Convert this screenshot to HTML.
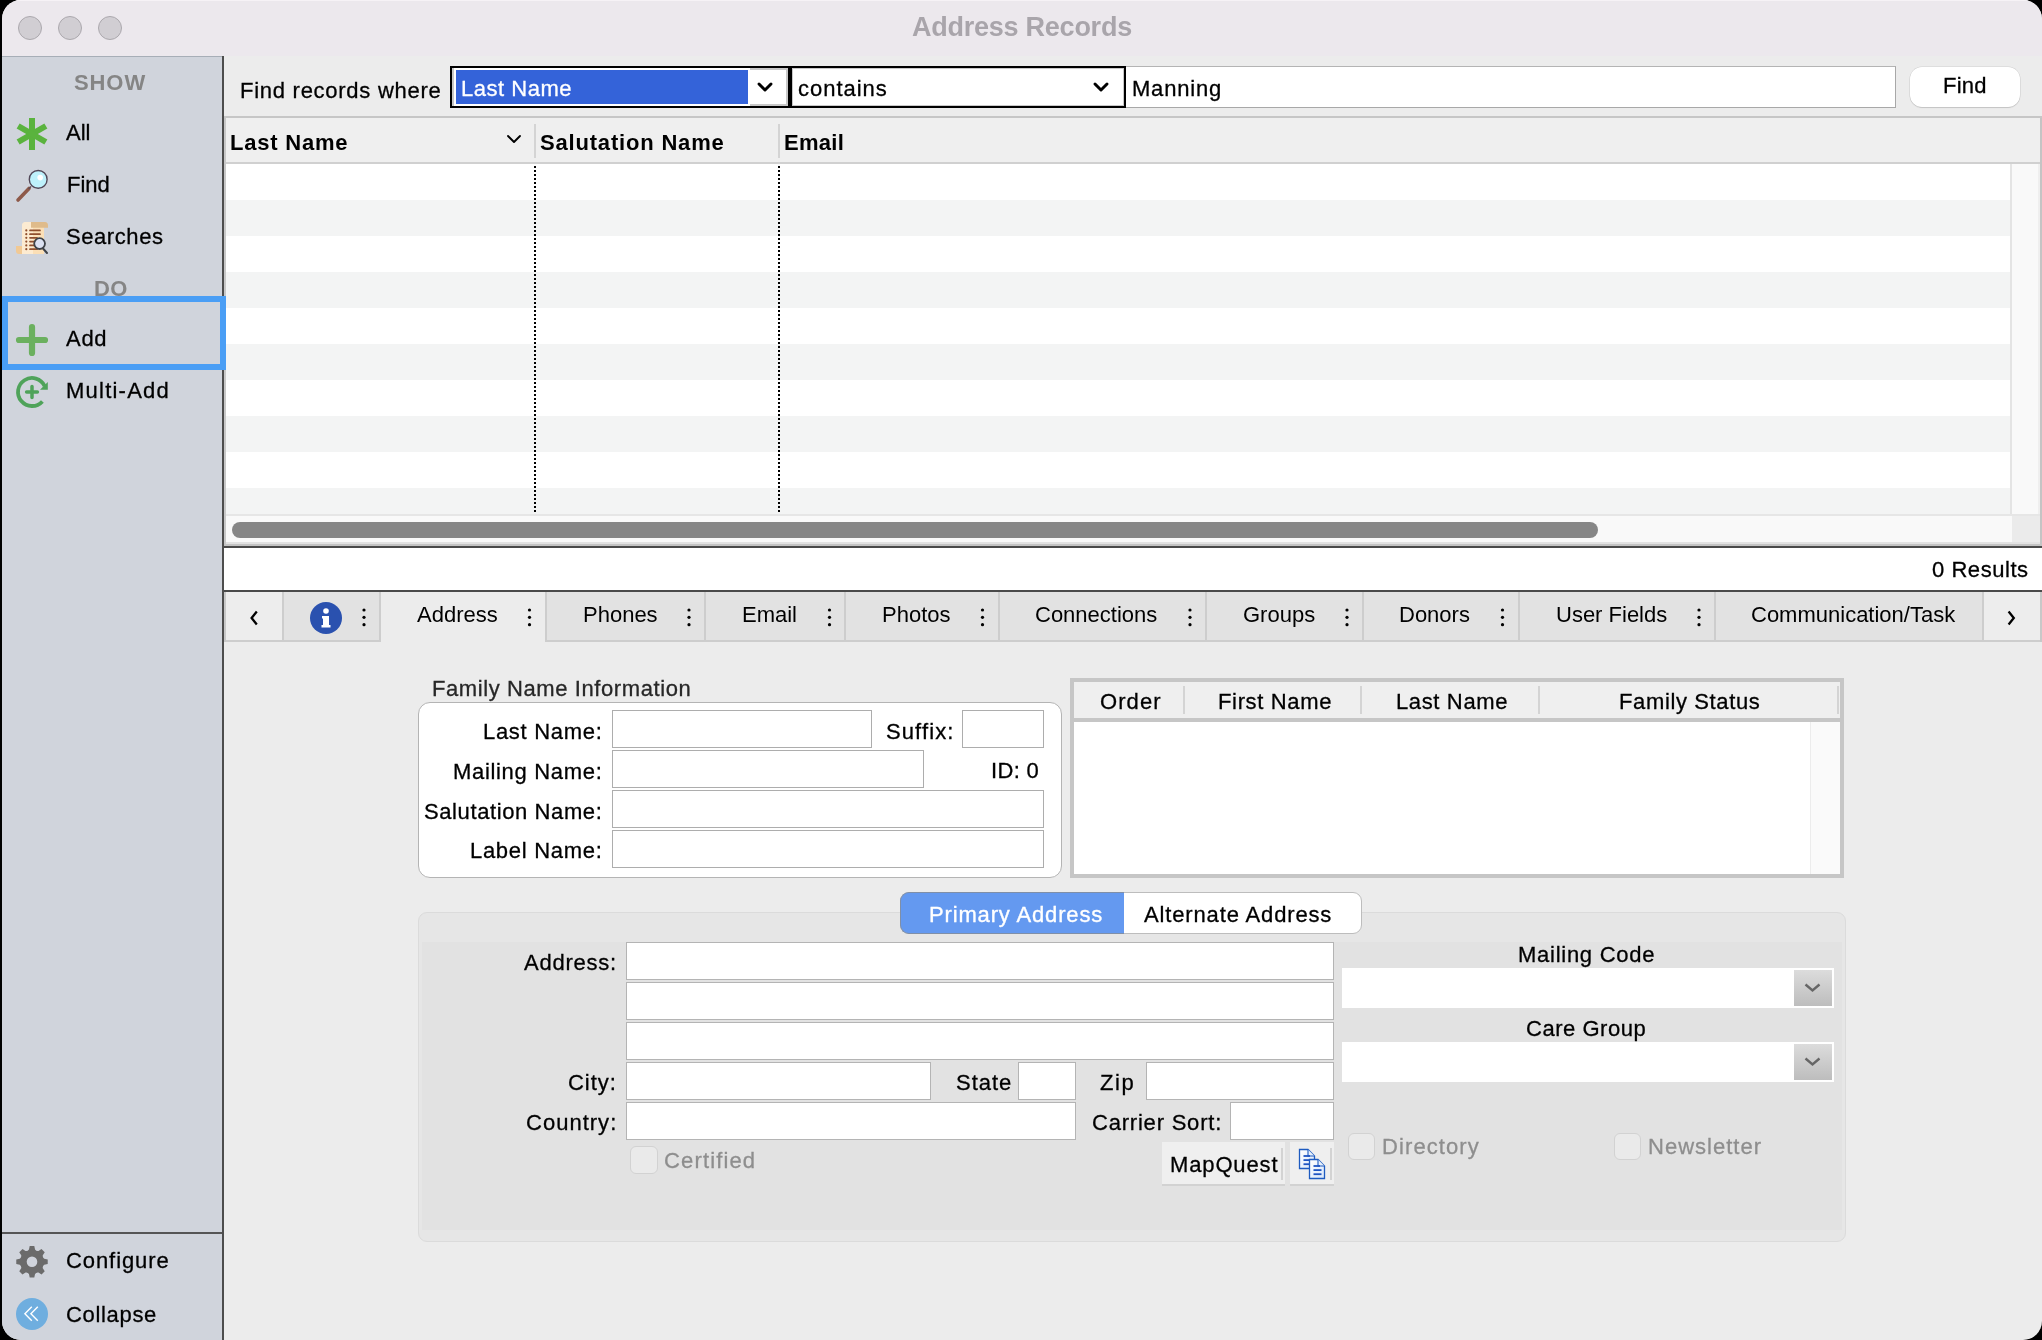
<!DOCTYPE html><html><head><meta charset="utf-8"><style>
html,body{margin:0;padding:0;width:2042px;height:1340px;overflow:hidden;background:#000;}
.a{position:absolute;box-sizing:border-box;}
.t{position:absolute;white-space:nowrap;line-height:1;font-family:"Liberation Sans",sans-serif;will-change:transform;}
#win{position:absolute;left:2px;top:0;width:2040px;height:1340px;border-radius:19px;overflow:hidden;background:#ECECEC;}
#in{position:absolute;left:-2px;top:0;width:2042px;height:1340px;}
svg{position:absolute;overflow:visible;}
</style></head><body><div id="win"><div id="in">
<div class="a" style="left:0px;top:0px;width:2042px;height:56px;background:#ECE8ED;"></div>
<div class="a" style="left:224px;top:56px;width:1818px;height:1px;background:#C9C9C9;"></div>
<div class="a" style="left:0px;top:0px;width:2042px;height:1px;background:#F6F2F6;"></div>
<div class="a" style="left:18px;top:16px;width:24px;height:24px;border-radius:50%;background:#D1CED3;border:1px solid #ABA8AD;"></div>
<div class="a" style="left:58px;top:16px;width:24px;height:24px;border-radius:50%;background:#D1CED3;border:1px solid #ABA8AD;"></div>
<div class="a" style="left:98px;top:16px;width:24px;height:24px;border-radius:50%;background:#D1CED3;border:1px solid #ABA8AD;"></div>
<div class="t" style="left:911.9px;top:14.1px;font-size:27px;font-weight:700;color:#A9A5AB;letter-spacing:-0.245px;">Address Records</div>
<div class="a" style="left:0px;top:56px;width:222px;height:1284px;background:#D0D4DC;"></div>
<div class="a" style="left:0px;top:56px;width:222px;height:1px;background:#A7AEB7;"></div>
<div class="a" style="left:222px;top:56px;width:2px;height:1284px;background:#4D4D4D;"></div>
<div class="t" style="left:73.7px;top:72.4px;font-size:22px;font-weight:700;color:#858585;letter-spacing:0.902px;">SHOW</div>
<div class="t" style="left:66.1px;top:122.4px;font-size:22px;font-weight:400;color:#000;letter-spacing:0.000px;-webkit-text-stroke:0.3px #000;">All</div>
<div class="t" style="left:66.6px;top:174.4px;font-size:22px;font-weight:400;color:#000;letter-spacing:0.000px;-webkit-text-stroke:0.3px #000;">Find</div>
<div class="t" style="left:66.1px;top:226.4px;font-size:22px;font-weight:400;color:#000;letter-spacing:0.572px;-webkit-text-stroke:0.3px #000;">Searches</div>
<div class="t" style="left:94.3px;top:278.4px;font-size:22px;font-weight:700;color:#858585;letter-spacing:0.460px;">DO</div>
<div class="t" style="left:66.1px;top:328.4px;font-size:22px;font-weight:400;color:#000;letter-spacing:0.702px;-webkit-text-stroke:0.3px #000;">Add</div>
<div class="t" style="left:66.1px;top:380.4px;font-size:22px;font-weight:400;color:#000;letter-spacing:1.230px;-webkit-text-stroke:0.3px #000;">Multi-Add</div>
<div class="a" style="left:0px;top:1232px;width:222px;height:2px;background:#555;"></div>
<div class="t" style="left:65.9px;top:1250.4px;font-size:22px;font-weight:400;color:#000;letter-spacing:0.921px;-webkit-text-stroke:0.3px #000;">Configure</div>
<div class="t" style="left:65.9px;top:1303.9px;font-size:22px;font-weight:400;color:#000;letter-spacing:0.679px;-webkit-text-stroke:0.3px #000;">Collapse</div>
<svg style="left:0;top:0" width="1" height="1"><rect x="29" y="118" width="6" height="32" fill="#5AB33E" transform="rotate(0 32 134)"/><rect x="29" y="118" width="6" height="32" fill="#5AB33E" transform="rotate(60 32 134)"/><rect x="29" y="118" width="6" height="32" fill="#5AB33E" transform="rotate(-60 32 134)"/><line x1="18" y1="200" x2="29" y2="188.5" stroke="#8E5A4A" stroke-width="3.6" stroke-linecap="round"/><line x1="28.5" y1="189" x2="31" y2="186.5" stroke="#5B4B55" stroke-width="1.2"/><circle cx="38.2" cy="179.4" r="8.9" fill="#BEF1FB" stroke="#524858" stroke-width="1.4"/><circle cx="40.2" cy="177.6" r="2.8" fill="#fff"/><path d="M16 246 H24 V254 H19 Q16 254 16 251 Z" fill="#F1C994"/><path d="M22 226 Q22 222 26 222 H33 V254 H22 Z" fill="#FDEBD0"/><rect x="33" y="226" width="11" height="28" fill="#FBDFB6"/><path d="M31 222 H45 Q48 222 48 225.5 V227.7 H31 Z" fill="#DFBB8B"/><path d="M26 222 Q30 222 30.5 226 V227.7 H22 V226 Q22 222 26 222Z" fill="#FCEBD2"/><circle cx="26.3" cy="230.4" r="1.1" fill="#8F4F2E"/><line x1="30" y1="230.4" x2="40" y2="230.4" stroke="#8F4F2E" stroke-width="1.7" stroke-linecap="round"/><circle cx="26.3" cy="234.2" r="1.1" fill="#8F4F2E"/><line x1="30" y1="234.2" x2="40" y2="234.2" stroke="#8F4F2E" stroke-width="1.7" stroke-linecap="round"/><circle cx="26.3" cy="237.8" r="1.1" fill="#8F4F2E"/><line x1="30" y1="237.8" x2="37" y2="237.8" stroke="#8F4F2E" stroke-width="1.7" stroke-linecap="round"/><circle cx="26.3" cy="241.6" r="1.1" fill="#8F4F2E"/><line x1="30" y1="241.6" x2="37" y2="241.6" stroke="#8F4F2E" stroke-width="1.7" stroke-linecap="round"/><circle cx="26.3" cy="245.4" r="1.1" fill="#8F4F2E"/><line x1="30" y1="245.4" x2="37" y2="245.4" stroke="#8F4F2E" stroke-width="1.7" stroke-linecap="round"/><circle cx="26.3" cy="249.2" r="1.1" fill="#8F4F2E"/><line x1="30" y1="249.2" x2="37" y2="249.2" stroke="#8F4F2E" stroke-width="1.7" stroke-linecap="round"/><line x1="43" y1="248.5" x2="47" y2="253" stroke="#3F4349" stroke-width="2" stroke-linecap="round"/><circle cx="39.6" cy="243.6" r="5.4" fill="#DCE2F2" stroke="#3F4349" stroke-width="1.8"/><path d="M32 327 V353 M19 340 H45" stroke="#6BB05F" stroke-width="6.2" stroke-linecap="round"/><path d="M44.7 386.1 A14 14 0 1 0 42.4 401.4" fill="none" stroke="#4FA35A" stroke-width="3.8"/><path d="M47.8 382 L47.8 389.8 L40 389.8 Z" fill="#4FA35A"/><path d="M32 386.6 V397.4 M26.6 392 H37.4" stroke="#4FA35A" stroke-width="3.5" stroke-linecap="round"/><path d="M28.95 1249.57 L29.70 1246.07 L34.30 1246.07 L35.05 1249.57 Q36.29 1251.45 38.49 1251.00 L41.50 1249.05 L44.75 1252.30 L42.80 1255.31 Q42.35 1257.51 44.23 1258.75 L47.73 1259.50 L47.73 1264.10 L44.23 1264.85 Q42.35 1266.09 42.80 1268.29 L44.75 1271.30 L41.50 1274.55 L38.49 1272.60 Q36.29 1272.15 35.05 1274.03 L34.30 1277.53 L29.70 1277.53 L28.95 1274.03 Q27.71 1272.15 25.51 1272.60 L22.50 1274.55 L19.25 1271.30 L21.20 1268.29 Q21.65 1266.09 19.77 1264.85 L16.27 1264.10 L16.27 1259.50 L19.77 1258.75 Q21.65 1257.51 21.20 1255.31 L19.25 1252.30 L22.50 1249.05 L25.51 1251.00 Q27.71 1251.45 28.95 1249.57Z" fill="#6B6B6B"/><circle cx="32" cy="1261.8" r="5.3" fill="#D0D4DC"/><circle cx="32" cy="1314" r="16" fill="#6FAEDF"/><path d="M31.8 1306.8 L24.9 1313.8 L31.8 1320.8 M37.8 1306.8 L30.9 1313.8 L37.8 1320.8" fill="none" stroke="#fff" stroke-width="1.4"/></svg>
<div class="a" style="left:2px;top:296px;width:224px;height:74px;border:6px solid #4A9EF5;z-index:5;"></div>
<div class="a" style="left:224px;top:56px;width:1818px;height:62px;background:#ECECEC;"></div>
<div class="a" style="left:224px;top:116px;width:1818px;height:2px;background:#C6C6C6;"></div>
<div class="t" style="left:240.1px;top:80.4px;font-size:22px;font-weight:400;color:#000;letter-spacing:0.732px;-webkit-text-stroke:0.3px #000;">Find records where</div>
<div class="a" style="left:450px;top:66px;width:340px;height:42px;background:#fff;border:2px solid #000;"></div>
<div class="a" style="left:452px;top:68px;width:1.6px;height:38px;background:#C8C8C8;"></div>
<div class="a" style="left:750px;top:68px;width:38px;height:1.6px;background:#C8C8C8;"></div>
<div class="a" style="left:750px;top:104.4px;width:38px;height:1.6px;background:#C8C8C8;"></div>
<div class="a" style="left:786.4px;top:68px;width:1.6px;height:38px;background:#C8C8C8;"></div>
<div class="a" style="left:456px;top:70px;width:292px;height:34px;background:#3463D9;"></div>
<div class="t" style="left:460.7px;top:78.4px;font-size:22px;font-weight:400;color:#fff;letter-spacing:0.509px;-webkit-text-stroke:0.3px #fff;">Last Name</div>
<div class="a" style="left:790px;top:66px;width:336px;height:42px;background:#fff;border:2px solid #000;"></div>
<div class="a" style="left:792px;top:68px;width:332px;height:38px;border:1.6px solid #C8C8C8;"></div>
<div class="t" style="left:798.1px;top:78.4px;font-size:22px;font-weight:400;color:#000;letter-spacing:0.972px;-webkit-text-stroke:0.3px #000;">contains</div>
<svg style="left:0;top:0" width="1" height="1"><path d="M759 84 L765 90 L771 84" fill="none" stroke="#000" stroke-width="3" stroke-linecap="round" stroke-linejoin="round"/><path d="M1095 84 L1101 90 L1107 84" fill="none" stroke="#000" stroke-width="3" stroke-linecap="round" stroke-linejoin="round"/></svg>
<div class="a" style="left:1126px;top:66px;width:770px;height:42px;background:#fff;border:1px solid #A8A8A8;border-left:none;border-top-color:#B4B4B4;"></div>
<div class="t" style="left:1132.1px;top:78.4px;font-size:22px;font-weight:400;color:#000;letter-spacing:0.795px;-webkit-text-stroke:0.3px #000;">Manning</div>
<div class="a" style="left:1909.6px;top:66.6px;width:110.6px;height:40.5px;background:#fff;border-radius:12px;box-shadow:0 0 0 0.5px rgba(0,0,0,0.12),0 1px 1px rgba(0,0,0,0.12);"></div>
<div class="t" style="left:1942.5px;top:74.7px;font-size:22px;font-weight:400;color:#000;letter-spacing:0.254px;-webkit-text-stroke:0.3px #000;">Find</div>
<div class="a" style="left:224px;top:118px;width:1818px;height:428px;background:#fff;"></div>
<div class="a" style="left:224px;top:118px;width:2px;height:428px;background:#C8C8C8;"></div>
<div class="a" style="left:2040px;top:118px;width:2px;height:428px;background:#C4C4C4;"></div>
<div class="a" style="left:226px;top:118px;width:1814px;height:44px;background:#EFEFEF;"></div>
<div class="a" style="left:226px;top:162px;width:1814px;height:2px;background:#D0D0D0;"></div>
<div class="a" style="left:534px;top:124px;width:2px;height:34px;background:#D4D4D4;"></div>
<div class="a" style="left:778px;top:124px;width:2px;height:34px;background:#D4D4D4;"></div>
<div class="t" style="left:230.1px;top:132.4px;font-size:22px;font-weight:700;color:#000;letter-spacing:0.785px;">Last Name</div>
<div class="t" style="left:540.1px;top:132.4px;font-size:22px;font-weight:700;color:#000;letter-spacing:0.813px;">Salutation Name</div>
<div class="t" style="left:784.1px;top:132.4px;font-size:22px;font-weight:700;color:#000;letter-spacing:0.264px;">Email</div>
<svg style="left:0;top:0" width="1" height="1"><path d="M508 136 L514 142 L520 136" fill="none" stroke="#000" stroke-width="1.9" stroke-linecap="round" stroke-linejoin="round"/></svg>
<div class="a" style="left:226px;top:200px;width:1784px;height:36px;background:#F3F4F4;"></div>
<div class="a" style="left:226px;top:272px;width:1784px;height:36px;background:#F3F4F4;"></div>
<div class="a" style="left:226px;top:344px;width:1784px;height:36px;background:#F3F4F4;"></div>
<div class="a" style="left:226px;top:416px;width:1784px;height:36px;background:#F3F4F4;"></div>
<div class="a" style="left:226px;top:488px;width:1784px;height:27px;background:#F3F4F4;"></div>
<div class="a" style="left:534px;top:166px;width:2px;height:346px;background-image:linear-gradient(#000 50%,transparent 50%);background-size:2px 4px;"></div>
<div class="a" style="left:778px;top:166px;width:2px;height:346px;background-image:linear-gradient(#000 50%,transparent 50%);background-size:2px 4px;"></div>
<div class="a" style="left:2010px;top:164px;width:30px;height:352px;background:#F9F9F9;border-left:2px solid #E4E4E4;border-right:2px solid #EFEFEF;"></div>
<div class="a" style="left:226px;top:514px;width:1814px;height:30px;background:#F9F9F9;border-top:2px solid #E6E6E6;border-bottom:2px solid #E2E2E2;"></div>
<div class="a" style="left:224px;top:544px;width:1818px;height:2px;background:#C4C4C4;"></div>
<div class="a" style="left:2012px;top:516px;width:28px;height:26px;background:#EBEBEB;"></div>
<div class="a" style="left:232px;top:522px;width:1366px;height:16px;background:#868686;border-radius:8px;"></div>
<div class="a" style="left:224px;top:546px;width:1818px;height:2px;background:#4A4A4A;"></div>
<div class="a" style="left:224px;top:548px;width:1818px;height:42px;background:#fff;"></div>
<div class="t" style="left:1932.1px;top:559.4px;font-size:22px;font-weight:400;color:#000;letter-spacing:0.543px;-webkit-text-stroke:0.3px #000;">0 Results</div>
<div class="a" style="left:224px;top:590px;width:1818px;height:2px;background:#4A4A4A;"></div>
<div class="a" style="left:224px;top:592px;width:1818px;height:50px;background:#E2E2E2;"></div>
<div class="a" style="left:224px;top:640px;width:1818px;height:2px;background:#CDCDCD;"></div>
<div class="a" style="left:224px;top:592px;width:2px;height:50px;background:#C8C8C8;"></div>
<div class="a" style="left:226px;top:592px;width:56px;height:48px;background:#EDEDED;"></div>
<div class="a" style="left:1984px;top:592px;width:56px;height:48px;background:#EDEDED;"></div>
<div class="a" style="left:2040px;top:592px;width:2px;height:50px;background:#C8C8C8;"></div>
<div class="a" style="left:381px;top:592px;width:164px;height:50px;background:#ECECEC;"></div>
<div class="a" style="left:282px;top:592px;width:2px;height:48px;background:#CDCDCD;"></div>
<div class="a" style="left:379px;top:592px;width:2px;height:50px;background:#CDCDCD;"></div>
<div class="a" style="left:545px;top:592px;width:2px;height:50px;background:#CDCDCD;"></div>
<div class="a" style="left:704px;top:592px;width:2px;height:48px;background:#CDCDCD;"></div>
<div class="a" style="left:844px;top:592px;width:2px;height:48px;background:#CDCDCD;"></div>
<div class="a" style="left:998px;top:592px;width:2px;height:48px;background:#CDCDCD;"></div>
<div class="a" style="left:1205px;top:592px;width:2px;height:48px;background:#CDCDCD;"></div>
<div class="a" style="left:1362px;top:592px;width:2px;height:48px;background:#CDCDCD;"></div>
<div class="a" style="left:1518px;top:592px;width:2px;height:48px;background:#CDCDCD;"></div>
<div class="a" style="left:1714px;top:592px;width:2px;height:48px;background:#CDCDCD;"></div>
<div class="a" style="left:1982px;top:592px;width:2px;height:48px;background:#CDCDCD;"></div>
<div class="t" style="left:416.6px;top:604.4px;font-size:22px;font-weight:400;color:#000;letter-spacing:0.000px;">Address</div>
<div class="t" style="left:582.9px;top:604.4px;font-size:22px;font-weight:400;color:#000;letter-spacing:0.000px;">Phones</div>
<div class="t" style="left:742.1px;top:604.4px;font-size:22px;font-weight:400;color:#000;letter-spacing:0.000px;">Email</div>
<div class="t" style="left:881.7px;top:604.4px;font-size:22px;font-weight:400;color:#000;letter-spacing:0.000px;">Photos</div>
<div class="t" style="left:1035.3px;top:604.4px;font-size:22px;font-weight:400;color:#000;letter-spacing:0.000px;">Connections</div>
<div class="t" style="left:1243.0px;top:604.4px;font-size:22px;font-weight:400;color:#000;letter-spacing:0.000px;">Groups</div>
<div class="t" style="left:1399.4px;top:604.4px;font-size:22px;font-weight:400;color:#000;letter-spacing:0.000px;">Donors</div>
<div class="t" style="left:1555.6px;top:604.4px;font-size:22px;font-weight:400;color:#000;letter-spacing:0.000px;">User Fields</div>
<div class="t" style="left:1751.1px;top:604.4px;font-size:22px;font-weight:400;color:#000;letter-spacing:0.000px;">Communication/Task</div>
<svg style="left:0;top:0" width="1" height="1"><circle cx="364" cy="610" r="1.6" fill="#000"/><circle cx="364" cy="617.3" r="1.6" fill="#000"/><circle cx="364" cy="624.7" r="1.6" fill="#000"/><circle cx="529.5" cy="610" r="1.6" fill="#000"/><circle cx="529.5" cy="617.3" r="1.6" fill="#000"/><circle cx="529.5" cy="624.7" r="1.6" fill="#000"/><circle cx="689" cy="610" r="1.6" fill="#000"/><circle cx="689" cy="617.3" r="1.6" fill="#000"/><circle cx="689" cy="624.7" r="1.6" fill="#000"/><circle cx="829.5" cy="610" r="1.6" fill="#000"/><circle cx="829.5" cy="617.3" r="1.6" fill="#000"/><circle cx="829.5" cy="624.7" r="1.6" fill="#000"/><circle cx="982.5" cy="610" r="1.6" fill="#000"/><circle cx="982.5" cy="617.3" r="1.6" fill="#000"/><circle cx="982.5" cy="624.7" r="1.6" fill="#000"/><circle cx="1190" cy="610" r="1.6" fill="#000"/><circle cx="1190" cy="617.3" r="1.6" fill="#000"/><circle cx="1190" cy="624.7" r="1.6" fill="#000"/><circle cx="1347" cy="610" r="1.6" fill="#000"/><circle cx="1347" cy="617.3" r="1.6" fill="#000"/><circle cx="1347" cy="624.7" r="1.6" fill="#000"/><circle cx="1502.5" cy="610" r="1.6" fill="#000"/><circle cx="1502.5" cy="617.3" r="1.6" fill="#000"/><circle cx="1502.5" cy="624.7" r="1.6" fill="#000"/><circle cx="1699" cy="610" r="1.6" fill="#000"/><circle cx="1699" cy="617.3" r="1.6" fill="#000"/><circle cx="1699" cy="624.7" r="1.6" fill="#000"/><path d="M256.8 611.5 L251.6 618 L256.8 624.5" fill="none" stroke="#000" stroke-width="2.3" stroke-linejoin="miter"/><path d="M2008.6 611.5 L2013.8 618 L2008.6 624.5" fill="none" stroke="#000" stroke-width="2.3" stroke-linejoin="miter"/><circle cx="326" cy="618" r="16" fill="#2A51AF"/><circle cx="326" cy="611" r="2.8" fill="#fff"/><path d="M322 616 H329 V625 H330.5 V627.5 H321.5 V625 H323 V618.5 H322 Z" fill="#fff"/></svg>
<div class="t" style="left:432.1px;top:678.4px;font-size:22px;font-weight:400;color:#272727;letter-spacing:0.591px;-webkit-text-stroke:0.3px #272727;">Family Name Information</div>
<div class="a" style="left:418px;top:702px;width:644px;height:176px;background:#fff;border:1px solid #B4B4B4;border-radius:12px;"></div>
<div class="a" style="left:612px;top:710px;width:260px;height:38px;background:#fff;border:1px solid #ADADAD;"></div>
<div class="a" style="left:962px;top:710px;width:82px;height:38px;background:#fff;border:1px solid #ADADAD;"></div>
<div class="a" style="left:612px;top:750px;width:312px;height:38px;background:#fff;border:1px solid #ADADAD;"></div>
<div class="a" style="left:612px;top:790px;width:432px;height:38px;background:#fff;border:1px solid #ADADAD;"></div>
<div class="a" style="left:612px;top:830px;width:432px;height:38px;background:#fff;border:1px solid #ADADAD;"></div>
<div class="t" style="left:483.1px;top:720.9px;font-size:22px;font-weight:400;color:#000;letter-spacing:0.696px;-webkit-text-stroke:0.3px #000;">Last Name:</div>
<div class="t" style="left:885.5px;top:720.9px;font-size:22px;font-weight:400;color:#000;letter-spacing:1.102px;-webkit-text-stroke:0.3px #000;">Suffix:</div>
<div class="t" style="left:453.1px;top:761.0px;font-size:22px;font-weight:400;color:#000;letter-spacing:0.679px;-webkit-text-stroke:0.3px #000;">Mailing Name:</div>
<div class="t" style="left:990.7px;top:760.4px;font-size:22px;font-weight:400;color:#000;letter-spacing:0.323px;-webkit-text-stroke:0.3px #000;">ID: 0</div>
<div class="t" style="left:424.0px;top:800.8px;font-size:22px;font-weight:400;color:#000;letter-spacing:0.600px;-webkit-text-stroke:0.3px #000;">Salutation Name:</div>
<div class="t" style="left:470.1px;top:840.4px;font-size:22px;font-weight:400;color:#000;letter-spacing:0.701px;-webkit-text-stroke:0.3px #000;">Label Name:</div>
<div class="a" style="left:1070px;top:678px;width:774px;height:200px;background:#fff;border:4px solid #C6C6C6;"></div>
<div class="a" style="left:1074px;top:682px;width:766px;height:36px;background:#EFEFEF;"></div>
<div class="a" style="left:1074px;top:718px;width:766px;height:4px;background:#C6C6C6;"></div>
<div class="a" style="left:1182.5px;top:686px;width:2px;height:28px;background:#D4D4D4;"></div>
<div class="a" style="left:1360px;top:686px;width:2px;height:28px;background:#D4D4D4;"></div>
<div class="a" style="left:1538px;top:686px;width:2px;height:28px;background:#D4D4D4;"></div>
<div class="a" style="left:1837px;top:686px;width:2px;height:28px;background:#D4D4D4;"></div>
<div class="a" style="left:1810px;top:722px;width:30px;height:152px;background:#FAFAFA;border-left:1px solid #ECECEC;"></div>
<div class="t" style="left:1099.5px;top:690.8px;font-size:22px;font-weight:400;color:#000;letter-spacing:1.077px;-webkit-text-stroke:0.3px #000;">Order</div>
<div class="t" style="left:1217.8px;top:690.8px;font-size:22px;font-weight:400;color:#000;letter-spacing:0.655px;-webkit-text-stroke:0.3px #000;">First Name</div>
<div class="t" style="left:1396.1px;top:690.8px;font-size:22px;font-weight:400;color:#000;letter-spacing:0.634px;-webkit-text-stroke:0.3px #000;">Last Name</div>
<div class="t" style="left:1619.3px;top:690.8px;font-size:22px;font-weight:400;color:#000;letter-spacing:0.625px;-webkit-text-stroke:0.3px #000;">Family Status</div>
<div class="a" style="left:418px;top:912px;width:1428px;height:330px;background:#E6E6E6;border:1px solid #DBDBDB;border-radius:9px;"></div>
<div class="a" style="left:422px;top:942px;width:1420px;height:288px;background:#E2E2E2;"></div>
<div class="a" style="left:900px;top:892px;width:462px;height:42px;background:#fff;border:1px solid #BDBDBD;border-radius:9px;"></div>
<div class="a" style="left:900px;top:892px;width:224px;height:42px;background:#6499F0;border:1px solid #7F8FA8;border-right:none;border-radius:9px 0 0 9px;"></div>
<div class="t" style="left:929.3px;top:903.7px;font-size:22px;font-weight:400;color:#fff;letter-spacing:0.848px;-webkit-text-stroke:0.35px #fff;">Primary Address</div>
<div class="t" style="left:1144.3px;top:903.7px;font-size:22px;font-weight:400;color:#000;letter-spacing:0.856px;-webkit-text-stroke:0.3px #000;">Alternate Address</div>
<div class="a" style="left:626px;top:942px;width:708px;height:38px;background:#fff;border:1px solid #B4B4B4;"></div>
<div class="a" style="left:626px;top:982px;width:708px;height:38px;background:#fff;border:1px solid #B4B4B4;"></div>
<div class="a" style="left:626px;top:1022px;width:708px;height:38px;background:#fff;border:1px solid #B4B4B4;"></div>
<div class="a" style="left:626px;top:1062px;width:305px;height:38px;background:#fff;border:1px solid #B4B4B4;"></div>
<div class="a" style="left:1018px;top:1062px;width:58px;height:38px;background:#fff;border:1px solid #B4B4B4;"></div>
<div class="a" style="left:1146px;top:1062px;width:188px;height:38px;background:#fff;border:1px solid #B4B4B4;"></div>
<div class="a" style="left:626px;top:1102px;width:450px;height:38px;background:#fff;border:1px solid #B4B4B4;"></div>
<div class="a" style="left:1230px;top:1102px;width:104px;height:38px;background:#fff;border:1px solid #B4B4B4;"></div>
<div class="t" style="left:523.7px;top:952.2px;font-size:22px;font-weight:400;color:#000;letter-spacing:0.762px;-webkit-text-stroke:0.3px #000;">Address:</div>
<div class="t" style="left:568.1px;top:1071.9px;font-size:22px;font-weight:400;color:#000;letter-spacing:0.940px;-webkit-text-stroke:0.3px #000;">City:</div>
<div class="t" style="left:955.6px;top:1071.9px;font-size:22px;font-weight:400;color:#000;letter-spacing:0.971px;-webkit-text-stroke:0.3px #000;">State</div>
<div class="t" style="left:1099.7px;top:1071.9px;font-size:22px;font-weight:400;color:#000;letter-spacing:1.599px;-webkit-text-stroke:0.3px #000;">Zip</div>
<div class="t" style="left:525.6px;top:1112.4px;font-size:22px;font-weight:400;color:#000;letter-spacing:1.015px;-webkit-text-stroke:0.3px #000;">Country:</div>
<div class="t" style="left:1091.9px;top:1112.4px;font-size:22px;font-weight:400;color:#000;letter-spacing:0.789px;-webkit-text-stroke:0.3px #000;">Carrier Sort:</div>
<div class="a" style="left:630px;top:1146px;width:28px;height:28px;background:#EAEAEA;border:1px solid #D2D2D2;border-radius:6px;"></div>
<div class="t" style="left:663.7px;top:1150.1px;font-size:22px;font-weight:400;color:#8E8E8E;letter-spacing:1.142px;-webkit-text-stroke:0.3px #8E8E8E;">Certified</div>
<div class="a" style="left:1162px;top:1142px;width:123px;height:43px;background:#EFEFEF;"></div>
<div class="a" style="left:1162px;top:1184px;width:123px;height:2px;background:#D2D2D2;"></div>
<div class="a" style="left:1281px;top:1148px;width:2px;height:32px;background:#D3D3D3;"></div>
<div class="t" style="left:1169.7px;top:1153.9px;font-size:22px;font-weight:400;color:#000;letter-spacing:0.866px;-webkit-text-stroke:0.3px #000;">MapQuest</div>
<div class="a" style="left:1290px;top:1142px;width:44px;height:43px;background:#EFEFEF;"></div>
<div class="a" style="left:1290px;top:1184px;width:44px;height:2px;background:#D2D2D2;"></div>
<div class="a" style="left:1330px;top:1148px;width:2px;height:32px;background:#D3D3D3;"></div>
<svg style="left:0;top:0" width="1" height="1"><defs><linearGradient id="dg" x1="0" y1="0" x2="1" y2="1"><stop offset="0" stop-color="#fff"/><stop offset="1" stop-color="#D8E6FA"/></linearGradient></defs><path d="M1299.5 1149.5 H1308.0 L1314.5 1156.0 V1168.5 H1299.5 Z" fill="url(#dg)" stroke="#1E5BC0" stroke-width="1.3"/><path d="M1308.0 1149.5 V1156.0 H1314.5" fill="#E6F0FC" stroke="#1E5BC0" stroke-width="1.1"/><rect x="1303.5" y="1155.1" width="6.5" height="1.8" fill="#1F55C2"/><rect x="1303.5" y="1159.1999999999998" width="8" height="1.8" fill="#1F55C2"/><rect x="1303.5" y="1163.3" width="8" height="1.8" fill="#1F55C2"/><path d="M1309.5 1159.5 H1318.0 L1324.5 1166.0 V1178.5 H1309.5 Z" fill="url(#dg)" stroke="#1E5BC0" stroke-width="1.3"/><path d="M1318.0 1159.5 V1166.0 H1324.5" fill="#E6F0FC" stroke="#1E5BC0" stroke-width="1.1"/><rect x="1313.5" y="1165.1" width="6.5" height="1.8" fill="#1F55C2"/><rect x="1313.5" y="1169.1999999999998" width="8" height="1.8" fill="#1F55C2"/><rect x="1313.5" y="1173.3" width="8" height="1.8" fill="#1F55C2"/></svg>
<div class="t" style="left:1517.8px;top:944.4px;font-size:22px;font-weight:400;color:#000;letter-spacing:0.732px;-webkit-text-stroke:0.3px #000;">Mailing Code</div>
<div class="a" style="left:1342px;top:968px;width:492px;height:40px;background:#fff;"></div>
<div class="a" style="left:1794px;top:970px;width:38px;height:36px;background:linear-gradient(#DCDCDC,#BDBDBD);"></div>
<div class="t" style="left:1525.7px;top:1018.4px;font-size:22px;font-weight:400;color:#000;letter-spacing:0.523px;-webkit-text-stroke:0.3px #000;">Care Group</div>
<div class="a" style="left:1342px;top:1042px;width:492px;height:40px;background:#fff;"></div>
<div class="a" style="left:1794px;top:1044px;width:38px;height:36px;background:linear-gradient(#DCDCDC,#BDBDBD);"></div>
<svg style="left:0;top:0" width="1" height="1"><path d="M1805.5 984.5 L1812.5 990.5 L1819.5 984.5" fill="none" stroke="#666" stroke-width="2.4"/><path d="M1805.5 1058.5 L1812.5 1064.5 L1819.5 1058.5" fill="none" stroke="#666" stroke-width="2.4"/></svg>
<div class="a" style="left:1348px;top:1133px;width:27px;height:27px;background:#EAEAEA;border:1px solid #D2D2D2;border-radius:6px;"></div>
<div class="t" style="left:1382.1px;top:1135.7px;font-size:22px;font-weight:400;color:#8E8E8E;letter-spacing:1.093px;-webkit-text-stroke:0.3px #8E8E8E;">Directory</div>
<div class="a" style="left:1614px;top:1133px;width:27px;height:27px;background:#EAEAEA;border:1px solid #D2D2D2;border-radius:6px;"></div>
<div class="t" style="left:1648.1px;top:1135.7px;font-size:22px;font-weight:400;color:#8E8E8E;letter-spacing:1.015px;-webkit-text-stroke:0.3px #8E8E8E;">Newsletter</div>
</div></div></body></html>
